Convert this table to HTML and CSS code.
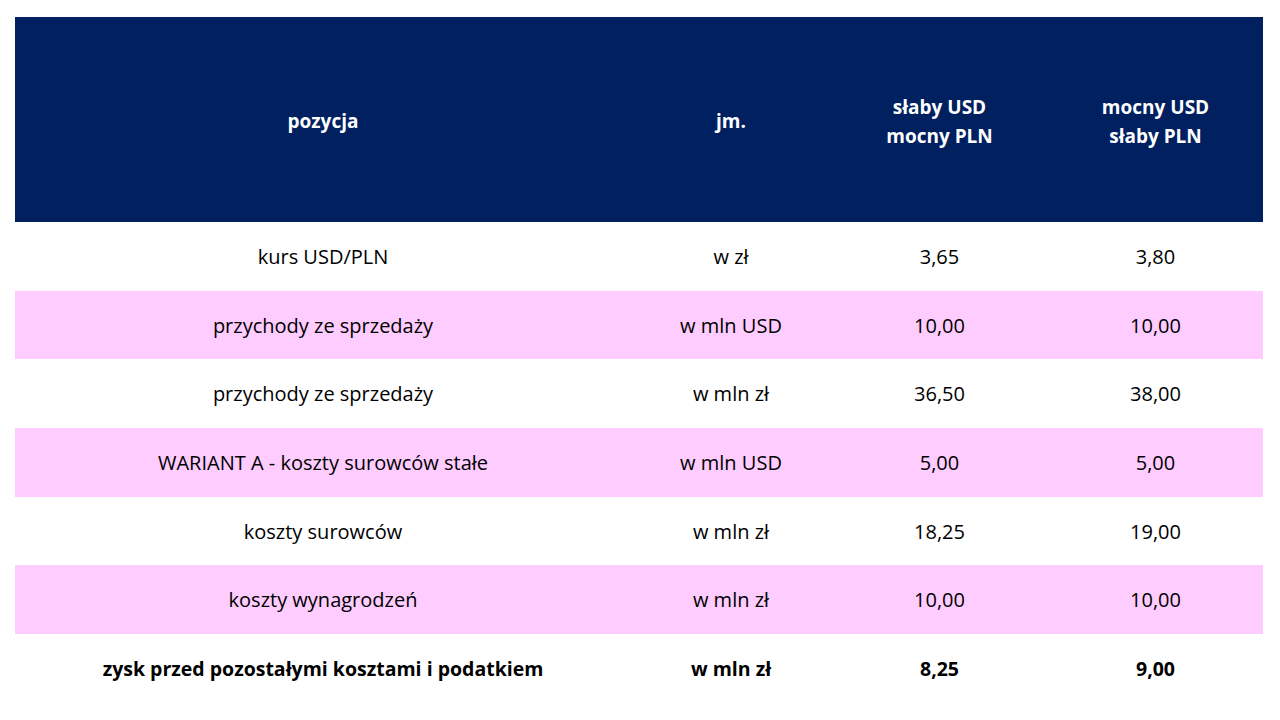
FILE: index.html
```html
<!DOCTYPE html>
<html lang="pl">
<head>
<meta charset="utf-8">
<link rel="stylesheet" href="styles.css">
</head>
<body>
<div class="table">
  <div class="row head">
    <div class="cell">pozycja</div>
    <div class="cell">jm.</div>
    <div class="cell">słaby USD<br>mocny PLN</div>
    <div class="cell">mocny USD<br>słaby PLN</div>
  </div>
  <div class="row">
    <div class="cell">kurs USD/PLN</div>
    <div class="cell">w zł</div>
    <div class="cell">3,65</div>
    <div class="cell">3,80</div>
  </div>
  <div class="row pink">
    <div class="cell">przychody ze sprzedaży</div>
    <div class="cell">w mln USD</div>
    <div class="cell">10,00</div>
    <div class="cell">10,00</div>
  </div>
  <div class="row">
    <div class="cell">przychody ze sprzedaży</div>
    <div class="cell">w mln zł</div>
    <div class="cell">36,50</div>
    <div class="cell">38,00</div>
  </div>
  <div class="row pink">
    <div class="cell">WARIANT A - koszty surowców stałe</div>
    <div class="cell">w mln USD</div>
    <div class="cell">5,00</div>
    <div class="cell">5,00</div>
  </div>
  <div class="row">
    <div class="cell">koszty surowców</div>
    <div class="cell">w mln zł</div>
    <div class="cell">18,25</div>
    <div class="cell">19,00</div>
  </div>
  <div class="row pink">
    <div class="cell">koszty wynagrodzeń</div>
    <div class="cell">w mln zł</div>
    <div class="cell">10,00</div>
    <div class="cell">10,00</div>
  </div>
  <div class="row total">
    <div class="cell">zysk przed pozostałymi kosztami i podatkiem</div>
    <div class="cell">w mln zł</div>
    <div class="cell">8,25</div>
    <div class="cell">9,00</div>
  </div>
</div>
</body>
</html>
```
FILE: styles.css
```css
html, body {
  margin: 0;
  padding: 0;
  background: #ffffff;
}
body {
  width: 1280px;
  height: 720px;
  padding: 17px 17px 0 15px;
  box-sizing: border-box;
  font-family: "Open Sans", "Liberation Sans", sans-serif;
  color: #000000;
}
.table {
  display: flex;
  flex-direction: column;
  width: 1248px;
}
.row {
  display: grid;
  grid-template-columns: 616px 200px 217px 215px;
  height: 68.7px;
  font-size: 20px;
}
.row .cell {
  display: flex;
  align-items: center;
  justify-content: center;
  text-align: center;
  line-height: 29px;
}
.head {
  height: 205px;
  background: #002060;
  color: #ffffff;
  font-weight: 700;
  font-size: 19px;
}
.head .cell {
  padding-top: 4px;
}
.pink {
  background: #ffccff;
}
.total {
  font-weight: 700;
  font-size: 19.5px;
}
```
